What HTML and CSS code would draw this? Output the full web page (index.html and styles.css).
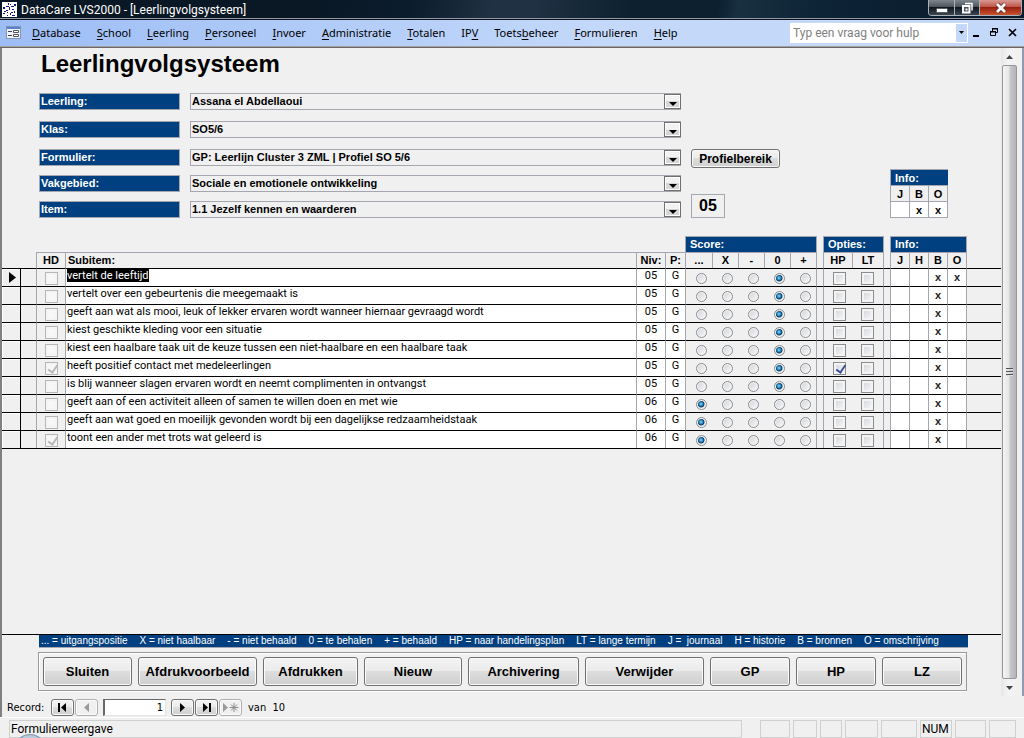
FILE: index.html
```html
<!DOCTYPE html>
<html lang="nl">
<head>
<meta charset="utf-8">
<title>DataCare LVS2000 - [Leerlingvolgsysteem]</title>
<link rel="stylesheet" href="styles.css">
</head>
<body>
<header class="titlebar">
  <svg class="app-icon" viewBox="0 0 15 15" width="15" height="15" aria-hidden="true"><rect width="15" height="15" fill="#fff"/><g fill="#15158c"><path d="M6 1h1v2H6zM8 2h1v1H8zM4 4h3v1H4zM1 5h2v2H1zM7 5h1v3H7zM9 4h3v1H9zM12 2h2v2h-2zM4 8h2v1H4zM2 9h2v1H2zM1 11h2v1H1zM5 10h1v1H5zM10 7h2v1h-2zM12 9h1v2h-1zM9 10h2v1H9zM8 11h1v2H8zM10 13h3v1h-3zM5 13h1v1H5z"/></g></svg>
  <span class="titlebar-text">DataCare LVS2000 - [Leerlingvolgsysteem]</span>
  <div class="window-buttons">
    <button class="wb wb-min" aria-label="Minimaliseren"><svg width="12" height="12" viewBox="0 0 12 12"><rect x=".5" y="6.500" width="11" height="4" rx="1" fill="#fff" stroke="#555b66"/></svg></button>
    <button class="wb wb-max" aria-label="Vorig formaat"><svg width="12" height="12" viewBox="0 0 12 12"><path d="M4 1.500h7v7" fill="none" stroke="#fff" stroke-width="1.500"/><path d="M2 4h6.500v6.500H2z" fill="#4c555e" stroke="#fff" stroke-width="2"/><path d="M4.500 6.500h2v2h-2z" fill="#fff"/></svg></button>
    <button class="wb wb-close" aria-label="Sluiten"><svg width="14" height="12" viewBox="0 0 14 12"><path d="M3 2l8 8M11 2l-8 8" stroke="#5b2a28" stroke-width="4.500"/><path d="M3 2l8 8M11 2l-8 8" stroke="#fff" stroke-width="2.800"/></svg></button>
  </div>
</header>
<nav class="menubar">
  <svg class="form-icon" viewBox="0 0 15 13" width="15" height="13" aria-hidden="true"><rect x=".5" y=".5" width="14" height="12" fill="#eef2fb" stroke="#8294b8"/><path d="M1 1h13v2H1z" fill="#5b80d0"/><path d="M2 5.500h4M2 9.500h4" stroke="#444"/><path d="M7.500 4.500h5v2h-5zM7.500 8.500h5v2h-5z" fill="#fff" stroke="#555"/></svg>
  <a href="#"><u>D</u>atabase</a><a href="#"><u>S</u>chool</a><a href="#"><u>L</u>eerling</a><a href="#"><u>P</u>ersoneel</a><a href="#"><u>I</u>nvoer</a><a href="#"><u>A</u>dministratie</a><a href="#"><u>T</u>otalen</a><a href="#">IP<u>V</u></a><a href="#">Toets<u>b</u>eheer</a><a href="#"><u>F</u>ormulieren</a><a href="#"><u>H</u>elp</a>
  <div class="ask">
    <input class="ask-input" type="text" placeholder="Typ een vraag voor hulp" aria-label="Typ een vraag voor hulp">
    <button class="ask-drop" aria-label="Vragenlijst"><svg width="5" height="3" viewBox="0 0 5 3"><path d="M0 0h5L2.500 3z"/></svg></button>
  </div>
  <div class="mdi">
    <button aria-label="Formulier minimaliseren"><svg width="11" height="11" viewBox="0 0 11 11"><path d="M2 8h6v2H2z"/></svg></button>
    <button aria-label="Formulier herstellen"><svg width="11" height="11" viewBox="0 0 11 11"><path d="M3.500 4V1.500h5v4H7" fill="none" stroke="#000"/><path d="M3 1h6v1.500H3zM1 4h6v1.500H1z"/><path d="M1.500 4.500h5v4h-5z" fill="none" stroke="#000"/></svg></button>
    <button aria-label="Formulier sluiten"><svg width="11" height="11" viewBox="0 0 11 11"><path d="M2 2l7 7M9 2L2 9" stroke="#000" stroke-width="1.700"/></svg></button>
  </div>
</nav>
<div class="workspace">
  <main class="form">
    <h1>Leerlingvolgsysteem</h1>
    <section class="filters">
      <label class="tag" for="f1">Leerling:</label>
      <div class="combo"><select id="f1"><option>Assana el Abdellaoui</option></select><span class="combo-arrow"></span></div>
      <label class="tag" for="f2">Klas:</label>
      <div class="combo"><select id="f2"><option>SO5/6</option></select><span class="combo-arrow"></span></div>
      <label class="tag" for="f3">Formulier:</label>
      <div class="combo"><select id="f3"><option>GP: Leerlijn Cluster 3 ZML | Profiel SO 5/6</option></select><span class="combo-arrow"></span></div>
      <label class="tag" for="f4">Vakgebied:</label>
      <div class="combo"><select id="f4"><option>Sociale en emotionele ontwikkeling</option></select><span class="combo-arrow"></span></div>
      <label class="tag" for="f5">Item:</label>
      <div class="combo"><select id="f5"><option>1.1 Jezelf kennen en waarderen</option></select><span class="combo-arrow"></span></div>
      <button class="push profile">Profielbereik</button>
      <output class="level">05</output>
      <table class="info">
        <thead><tr><th colspan="3" class="band">Info:</th></tr><tr><th>J</th><th>B</th><th>O</th></tr></thead>
        <tbody><tr><td></td><td>x</td><td>x</td></tr></tbody>
      </table>
    </section>
    <table class="items">
      <colgroup><col class="c-sel"><col class="c-pad"><col class="c-hd"><col><col class="c-niv"><col class="c-p"><col class="c-s1"><col class="c-s" span="4"><col class="c-gap"><col class="c-hp"><col class="c-lt"><col class="c-gap"><col class="c-info" span="4"><col class="c-rest"></colgroup>
      <thead>
        <tr><th colspan="6"></th><th colspan="5" class="band">Score:</th><th class="edge"></th><th colspan="2" class="band">Opties:</th><th class="edge"></th><th colspan="4" class="band">Info:</th><th class="edge"></th></tr>
        <tr class="names"><th colspan="2"></th><th class="line">HD</th><th class="line left">Subitem:</th><th class="line">Niv:</th><th class="line">P:</th><th class="line">...</th><th class="line">X</th><th class="line">-</th><th class="line">0</th><th class="line">+</th><th class="edge"></th><th class="line">HP</th><th class="line">LT</th><th class="edge"></th><th class="line">J</th><th class="line">H</th><th class="line">B</th><th class="line">O</th><th class="edge"></th></tr>
      </thead>
      <tbody id="rows"></tbody>
    </table>
    <div class="filler"></div>
    <div class="legend">
      <span>... = uitgangspositie</span><span>X = niet haalbaar</span><span>- = niet behaald</span><span>0 = te behalen</span><span>+ = behaald</span><span>HP = naar handelingsplan</span><span>LT = lange termijn</span><span>J =&nbsp; journaal</span><span>H = historie</span><span>B = bronnen</span><span>O = omschrijving</span>
    </div>
    <div class="actions">
      <button class="push w-close">Sluiten</button><button class="push w-wide">Afdrukvoorbeeld</button><button class="push w-print">Afdrukken</button><button class="push w-new">Nieuw</button><button class="push w-archive">Archivering</button><button class="push w-wide">Verwijder</button><button class="push w-short">GP</button><button class="push w-short">HP</button><button class="push w-short">LZ</button>
    </div>
    <div class="recordnav">
      <label for="rec">Record:</label>
      <button class="push nav" aria-label="Eerste"><svg width="11" height="9" viewBox="0 0 11 9"><path d="M1 0h2v9H1zM9 0v9L4 4.500z"/></svg></button>
      <button class="push nav" disabled aria-label="Vorige"><svg width="11" height="9" viewBox="0 0 11 9"><path d="M8 0v9L3 4.500z"/></svg></button>
      <input id="rec" type="text" value="1">
      <button class="push nav" aria-label="Volgende"><svg width="11" height="9" viewBox="0 0 11 9"><path d="M3 0v9l5-4.500z"/></svg></button>
      <button class="push nav" aria-label="Laatste"><svg width="11" height="9" viewBox="0 0 11 9"><path d="M2 0v9l5-4.500zM8 0h2v9H8z"/></svg></button>
      <button class="push nav" disabled aria-label="Nieuwe record"><svg width="17" height="11" viewBox="0 0 17 11"><path d="M1 1v9l5-4.500z"/><path d="M12 1v9M7.500 5.500h9M9 2.500l6 6M15 2.500l-6 6" stroke="#8c8c8c"/></svg></button>
      <span class="total">van&nbsp; 10</span>
    </div>
  </main>
  <aside class="scroll" aria-hidden="true">
    <span class="scroll-end"><svg width="7" height="4" viewBox="0 0 7 4"><path d="M0 4h7L3.500 0z" fill="#444"/></svg></span>
    <span class="scroll-thumb"><i></i><i></i><i></i></span>
    <span class="scroll-end"><svg width="7" height="4" viewBox="0 0 7 4"><path d="M0 0h7L3.500 4z" fill="#444"/></svg></span>
  </aside>
</div>
<footer class="status">
  <span class="pane main-pane">Formulierweergave</span><span class="pane p30"></span><span class="pane p24"></span><span class="pane p22"></span><span class="pane p33"></span><span class="pane p36"></span><span class="pane p32">NUM</span><span class="pane p31"></span><span class="pane p27"></span>
  <span class="orb"></span>
</footer>
<script src="rows.js"></script>
</body>
</html>
```
FILE: styles.css
```css
* { box-sizing: border-box; }
body {
  margin: 0;
  height: 100vh;
  overflow: hidden;
  display: flex;
  flex-direction: column;
  background: #f0f0f0;
  color: #000;
  font: 11px/14px "Liberation Sans", Arial, sans-serif;
}
button, input, select { font: inherit; color: inherit; margin: 0; padding: 0; border-radius: 0; }
button svg { display: block; }

.titlebar {
  height: 20px;
  flex: none;
  display: flex;
  align-items: flex-start;
  padding: 2px 2px 0 2px;
  background: linear-gradient(100deg, #0a1724 0 28%, #0b1c2c 40%, #1f3142 48% 52%, #0c2030 62% 70%, #183040 72%, #0d2336 80%, #0a1a2b);
  border-bottom: 1px solid #10101c;
  box-shadow: inset 0 -1px #8f99a3;
  color: #fff;
}
.titlebar-text { font: 12px/16px Roboto, "Noto Sans", sans-serif; margin-left: 4px; flex: 1; }
.window-buttons { display: flex; margin-top: -2px; border: 1px solid #a9b2ba; border-top: 0; border-radius: 0 0 4px 4px; overflow: hidden; }
.wb { height: 15px; border: 0; display: flex; align-items: center; justify-content: center; background: linear-gradient(#7f868d, #4c555e 45%, #0f1820 50%, #3b4650); }
.wb-min { width: 25px; }
.wb-max { width: 25px; border-left: 1px solid #a9b2ba; }
.wb-close { width: 42px; border-left: 1px solid #a9b2ba; background: linear-gradient(#d89a92, #c0564a 45%, #99200e 50%, #c9542e); }

.menubar {
  height: 28px;
  flex: none;
  display: flex;
  align-items: center;
  padding: 0 6px 2px 6px;
  background: linear-gradient(90deg, #9dbdf5, #c4d9fa 60%);
  border-bottom: 1px solid #6b6769;
  box-shadow: inset 0 -1px #a4a09e;
  font: 11px/16px "Noto Sans", "Open Sans", sans-serif;
}
.form-icon { margin-right: 3px; }
.menubar a { color: #000; text-decoration: none; padding: 0 8px; white-space: nowrap; }
.menubar u { text-underline-offset: 2px; }
.ask { display: flex; margin-left: auto; width: 178px; height: 20px; background: #fff; padding: 1px; }
.ask-input { flex: 1; min-width: 0; border: 0; padding: 0 2px; background: #fff; font: 12px/16px Roboto, "Noto Sans", sans-serif; }
.ask-input::placeholder { color: #7f7f7f; opacity: 1; }
.ask-drop { width: 11px; border: 0; background: #c4d9fa; display: flex; align-items: center; justify-content: center; }
.mdi { display: flex; gap: 7px; margin-left: 3px; }
.mdi button { border: 0; background: none; }

.workspace { flex: 1; min-height: 0; display: flex; border-left: 2px solid #808080; }
.form { flex: 1; min-width: 0; display: flex; flex-direction: column; }
h1 { margin: 0; padding: 2px 0 0 39px; font-size: 24px; line-height: 28px; font-weight: bold; }

.filters {
  display: grid;
  grid-template-columns: 141px minmax(0, 491px) 89px 1fr;
  grid-template-rows: 28px 28px 26px 26px 17px;
  column-gap: 10px;
  margin-top: 15px;
  padding: 0 53px 0 37px;
  font-weight: bold;
}
.tag { grid-column: 1; height: 17px; padding: 0 1px; border: 1px solid #a5a7b0; background: #003f80; color: #fff; line-height: 14px; }
.combo { grid-column: 2; position: relative; height: 17px; }
.combo select { width: 100%; height: 17px; display: block; appearance: none; border: 1px solid #a5a7b0; background: #f0f0f0; padding: 0 18px 1px 1px; font-weight: bold; }
.combo-arrow { position: absolute; right: 0; top: 1px; width: 17px; height: 15px; border: 1px solid #707070; box-shadow: inset 0 0 0 1px #fff; background: linear-gradient(#f2f2f2 50%, #d6d6d6 50%); pointer-events: none; }
.combo-arrow::after { content: ""; position: absolute; left: 4px; top: 7px; border: solid transparent; border-width: 4px 4px 0; border-top-color: #000; }
.push { border: 1px solid #707070; border-radius: 3px; box-shadow: inset 0 0 0 1px #fbfbfb; background: linear-gradient(#f3f3f3, #ebebeb 49%, #dddddd 50%, #cfcfcf); font-weight: bold; display: flex; align-items: center; justify-content: center; }
.profile { grid-column: 3; grid-row: 3; height: 19px; font-size: 12px; }
.level { grid-column: 3; grid-row: 4 / 6; align-self: end; width: 34px; height: 24px; border: 1px solid #a5a7b0; font-size: 16px; line-height: 22px; text-align: center; }
.info { grid-column: 4; grid-row: 3 / 6; justify-self: end; align-self: end; border-collapse: collapse; table-layout: fixed; width: 58px; }
.info th, .info td { border: 1px solid #a5a7b0; height: 16px; padding: 0; line-height: 14px; text-align: center; }
.info td { background: #fff; }
.info .band, .items .band { background: #003f80; color: #fff; text-align: left; padding-left: 4px; border: 1px solid #a5a7b0; border-right: 0; border-bottom: 0; }

.items { width: 100%; margin-top: 18px; table-layout: fixed; border-collapse: separate; border-spacing: 0; border-bottom: 1px solid #000; }
.c-sel { width: 19px; } .c-pad { width: 15px; } .c-hd, .c-niv, .c-hp { width: 29px; } .c-p { width: 20px; }
.c-s1 { width: 27px; } .c-s { width: 26px; } .c-gap { width: 7px; } .c-lt { width: 31px; } .c-info { width: 19px; } .c-rest { width: 35px; }
.items th { height: 16px; padding: 0; line-height: 15px; }
.items .edge { border-left: 1px solid #a5a7b0; }
.items .line { border-left: 1px solid #a5a7b0; border-top: 1px solid #a5a7b0; }
.items .left { text-align: left; padding-left: 2px; }
.items td { height: 18px; padding: 0; border-top: 1px solid #000; border-left: 1px solid #a5a7b0; line-height: 14px; text-align: center; vertical-align: top; white-space: nowrap; }
.items .sel { border-left: 0; border-right: 1px solid #000; box-shadow: inset 1px 1px #fff; }
.items .sel svg { display: block; margin: 3px 0 0 7px; }
.items .pad, .items .bare { border-left: 0; }
.items .white { background: #fff; font-family: Roboto, "Liberation Sans", sans-serif; }
.items .text { text-align: left; padding-left: 1px; overflow: hidden; }
.items .x { font: bold 11px/16px "Liberation Sans", Arial, sans-serif; color: #222; }
mark { background: #000; color: #fff; display: inline-block; line-height: 13px; }
.items input { appearance: none; display: block; background: linear-gradient(135deg, #cfd2d8, #fbfbfb); }
.items input[type=radio] { width: 11px; height: 11px; margin: 4px auto 0 10px; border: 1px solid #8a8c8e; border-radius: 50%; box-shadow: inset 0 0 0 1px #f6f6f6; }
.items input[type=radio]:checked { background: radial-gradient(circle at 4px 4px, #8fdcf5 0, #1c7fb8 2px, #0b3c68 3px, #e8e8e8 4px); }
.items input[type=checkbox] { width: 13px; height: 13px; margin: 3px auto 0 9px; border: 1px solid #8a8c8e; box-shadow: inset 0 0 0 2px #f4f4f4; }
.items .hd input { margin-left: 8px; border-color: #b6b6b6; background: #f7f7f7; }
.items .hp input { margin-left: 9px; }
.items .lt input { margin-left: 9px; }
.items input[type=checkbox]:checked::after { content: ""; display: block; width: 4px; height: 8px; margin: 0 0 0 4px; border: solid #3d5096; border-width: 0 2px 2px 0; transform: rotate(35deg); }
.items .hd input:checked::after { border-color: #b8b8b8; }

.filler { flex: 1; border-bottom: 1px solid #000; }
.legend { display: flex; gap: 12px; margin: 0 33px 0 37px; height: 13px; padding: 0 2px; background: #003f80; border-bottom: 1px solid #a5a7b0; color: #fff; font-size: 10px; line-height: 12px; white-space: nowrap; }
.actions { display: flex; gap: 6px; margin: 4px 34px 0 36px; height: 39px; padding: 4px 4px; border: 1px solid #999; box-shadow: inset 1px 1px #fff, 0 1px #fff; }
.actions .push { height: 29px; font-size: 13px; }
.w-close { flex: 0 1 89px; } .w-wide { flex: 0 1 119px; } .w-print { flex: 0 1 95px; } .w-new { flex: 0 1 98px; } .w-archive { flex: 0 1 111px; } .w-short { flex: 0 1 80px; }
.recordnav { display: flex; align-items: center; gap: 1px; height: 26px; padding: 7px 0 0 5px; font: 11px/16px "DejaVu Sans Condensed", "Noto Sans", sans-serif; }
.recordnav label { width: 43px; }
.nav { width: 23px; height: 17px; }
.nav:disabled { border-color: #b0b0b0; background: #f0f0f0; }
.nav:disabled svg { fill: #9a9a9a; }
#rec { width: 63px; height: 17px; margin: 0 4px; border: 1px solid #e3e3e3; border-top-color: #696969; border-left: 2px solid #696969; background: #fff; text-align: right; padding-right: 2px; }
.total { margin-left: 5px; }

.scroll { width: 23px; flex: none; margin-bottom: 21px; display: flex; flex-direction: column; padding: 0 5px 0 1px; border-right: 2px solid #8f9bb3; background: linear-gradient(90deg, #e6e6e6, #f3f3f3 30%, #f0f0f0); }
.scroll-end { height: 17px; display: flex; align-items: center; justify-content: center; }
.scroll-thumb { flex: 1; border: 1px solid #979797; border-radius: 2px; background: linear-gradient(90deg, #f4f4f4, #e6e6e6 45%, #c8c8cc 55%, #b4b4b8); display: flex; flex-direction: column; gap: 1px; align-items: center; justify-content: center; }
.scroll-thumb i { width: 7px; height: 2px; background: linear-gradient(#555 50%, #ddd 50%); }

.status { position: relative; flex: none; height: 21px; display: flex; gap: 3px; padding: 2px 8px 0 9px; border-top: 1px solid #fff; font: 12px/16px Roboto, "Noto Sans", sans-serif; }
.pane { border: 1px solid #d0d0d0; padding-left: 1px; height: 18px; }
.main-pane { flex: 1; margin-right: 15px; }
.p22 { width: 22px; } .p24 { width: 24px; } .p27 { width: 27px; } .p30 { width: 30px; } .p31 { width: 31px; } .p32 { width: 32px; } .p33 { width: 33px; } .p36 { width: 36px; }
.orb { position: absolute; left: 15px; bottom: -22px; width: 30px; height: 26px; border-radius: 50%; border: 1px solid #8296ac; background: #b8cbdc; }
```
FILE: rows.js
```js
const items = [
  ["vertelt de leeftijd", "05", 3, "xx"],
  ["vertelt over een gebeurtenis die meegemaakt is", "05", 3, "x"],
  ["geeft aan wat als mooi, leuk of lekker ervaren wordt wanneer hiernaar gevraagd wordt", "05", 3, "x"],
  ["kiest geschikte kleding voor een situatie", "05", 3, "x"],
  ["kiest een haalbare taak uit de keuze tussen een niet-haalbare en een haalbare taak", "05", 3, "x"],
  ["heeft positief contact met medeleerlingen", "05", 3, "x", true, true],
  ["is blij wanneer slagen ervaren wordt en neemt complimenten in ontvangst", "05", 3, "x"],
  ["geeft aan of een activiteit alleen of samen te willen doen en met wie", "06", 0, "x"],
  ["geeft aan wat goed en moeilijk gevonden wordt bij een dagelijkse redzaamheidstaak", "06", 0, "x"],
  ["toont een ander met trots wat geleerd is", "06", 0, "x", true]
];
const scores = ["...", "X", "-", "0", "+"];
const box = (label, on, off) => `<input type="checkbox" aria-label="${label}"${on ? " checked" : ""}${off ? " disabled" : ""}>`;
document.getElementById("rows").innerHTML = items.map(([text, level, score, marks, hd, hp], r) => `<tr>
<td class="sel">${r ? "" : '<svg width="7" height="11" viewBox="0 0 7 11"><path d="M0 0v11l7-5.500z"/></svg>'}</td><td class="pad"></td>
<td class="hd">${box("HD", hd, true)}</td>
<td class="text white">${r ? text : `<mark>${text}</mark>`}</td><td class="white">${level}</td><td class="white">G</td>
${scores.map((s, i) => `<td${i ? ' class="bare"' : ""}><input type="radio" name="score${r}" aria-label="${s}"${i === score ? " checked" : ""}></td>`).join("")}
<td></td><td class="hp">${box("HP", hp)}</td><td class="lt bare">${box("LT")}</td><td></td>
<td class="white"></td><td class="white"></td><td class="white x">${marks[0] || ""}</td><td class="white x">${marks[1] || ""}</td><td></td></tr>`).join("");
```
